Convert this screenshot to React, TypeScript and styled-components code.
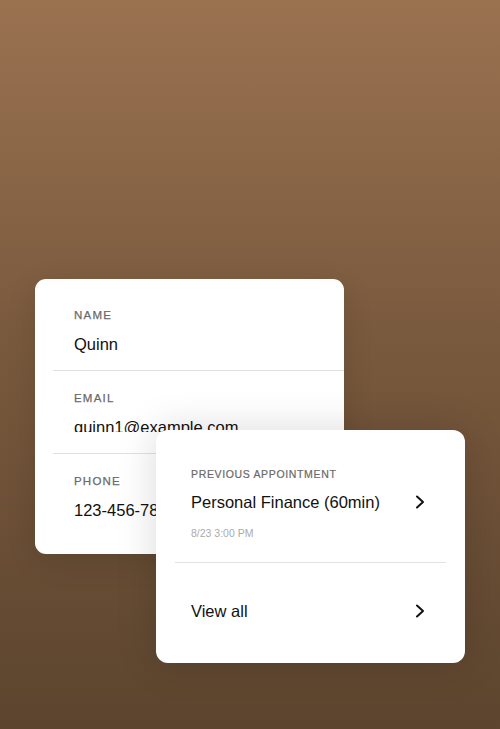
import React from "react";
import styled, { createGlobalStyle } from "styled-components";

const GlobalStyle = createGlobalStyle`
  html, body {
    margin: 0;
    padding: 0;
  }
  body {
    font-family: "Liberation Sans", Arial, sans-serif;
    -webkit-font-smoothing: antialiased;
  }
`;

const Page = styled.div`
  width: 100%;
  min-height: 100vh;
  background: linear-gradient(180deg, #9a7250 0%, #7a5a3e 45%, #5c442e 100%);
  overflow: hidden;
`;

const Stack = styled.div`
  display: flex;
  flex-direction: column;
  align-items: flex-start;
  padding: 279px 0 0 35px;
`;

const ContactCard = styled.section`
  position: relative;
  box-sizing: border-box;
  width: 309px;
  height: 275px;
  padding: 9px 0 18px 18px;
  background: #ffffff;
  border-radius: 11px;
  box-shadow: 0 8px 30px rgba(0, 0, 0, 0.12);
`;

const Field = styled.div<{ $last?: boolean }>`
  display: flex;
  flex-direction: column;
  gap: 10px;
  padding: 19px 0 15px 21px;
  border-bottom: ${(p) => (p.$last ? "none" : "1px solid #e0e0e0")};
`;

const FieldLabel = styled.div`
  font-size: 11.5px;
  line-height: 16px;
  letter-spacing: 1.2px;
  text-transform: uppercase;
  color: #6a6a6a;
  font-weight: 400;
  -webkit-text-stroke: 0.25px #6a6a6a;
`;

const FieldValue = styled.div<{ $clip?: boolean }>`
  font-size: 16.5px;
  line-height: 22px;
  color: #111111;
  white-space: nowrap;
  height: ${(p) => (p.$clip ? "16px" : "22px")};
  margin-bottom: ${(p) => (p.$clip ? "6px" : "0")};
  overflow: hidden;
`;

const AppointmentCard = styled.section`
  position: relative;
  box-sizing: border-box;
  width: 309px;
  height: 233px;
  margin: -124px 0 0 121px;
  background: #ffffff;
  border-radius: 12px;
  box-shadow: 0 0 40px rgba(0, 0, 0, 0.15);
  display: flex;
  flex-direction: column;
`;

const AppointmentInfo = styled.div`
  display: flex;
  flex-direction: column;
  padding: 37px 40px 22px 35px;
`;

const SmallCaps = styled.div`
  font-size: 10.5px;
  line-height: 14px;
  letter-spacing: 0.65px;
  text-transform: uppercase;
  color: #6a6a6a;
  -webkit-text-stroke: 0.2px #6a6a6a;
`;

const LinkRow = styled.div<{ $gap?: number }>`
  display: flex;
  align-items: center;
  justify-content: space-between;
  margin-top: ${(p) => p.$gap ?? 0}px;
`;

const LinkText = styled.span`
  font-size: 16.5px;
  line-height: 22px;
  color: #111111;
`;

const DateText = styled.div`
  margin-top: 13px;
  font-size: 10.5px;
  line-height: 14px;
  color: #ababab;
`;

const Divider = styled.hr`
  margin: 0 19px;
  border: none;
  border-top: 1px solid #e2e2e2;
  height: 0;
`;

const Footer = styled.div`
  padding: 37px 40px 0 35px;
`;

const Chevron = () => (
  <svg width="10" height="14" viewBox="0 0 10 14" fill="none" aria-hidden="true">
    <polyline
      points="2,1.5 8,7 2,12.5"
      stroke="#111111"
      strokeWidth="2"
      strokeLinecap="round"
      strokeLinejoin="round"
    />
  </svg>
);

export default function App() {
  return (
    <Page>
      <GlobalStyle />
      <Stack>
        <ContactCard>
          <Field>
            <FieldLabel>Name</FieldLabel>
            <FieldValue>Quinn</FieldValue>
          </Field>
          <Field>
            <FieldLabel>Email</FieldLabel>
            <FieldValue $clip>quinn1@example.com</FieldValue>
          </Field>
          <Field $last>
            <FieldLabel>Phone</FieldLabel>
            <FieldValue>123-456-7890</FieldValue>
          </Field>
        </ContactCard>

        <AppointmentCard>
          <AppointmentInfo>
            <SmallCaps>Previous appointment</SmallCaps>
            <LinkRow $gap={10}>
              <LinkText>Personal Finance (60min)</LinkText>
              <Chevron />
            </LinkRow>
            <DateText>8/23 3:00 PM</DateText>
          </AppointmentInfo>
          <Divider />
          <Footer>
            <LinkRow>
              <LinkText>View all</LinkText>
              <Chevron />
            </LinkRow>
          </Footer>
        </AppointmentCard>
      </Stack>
    </Page>
  );
}
